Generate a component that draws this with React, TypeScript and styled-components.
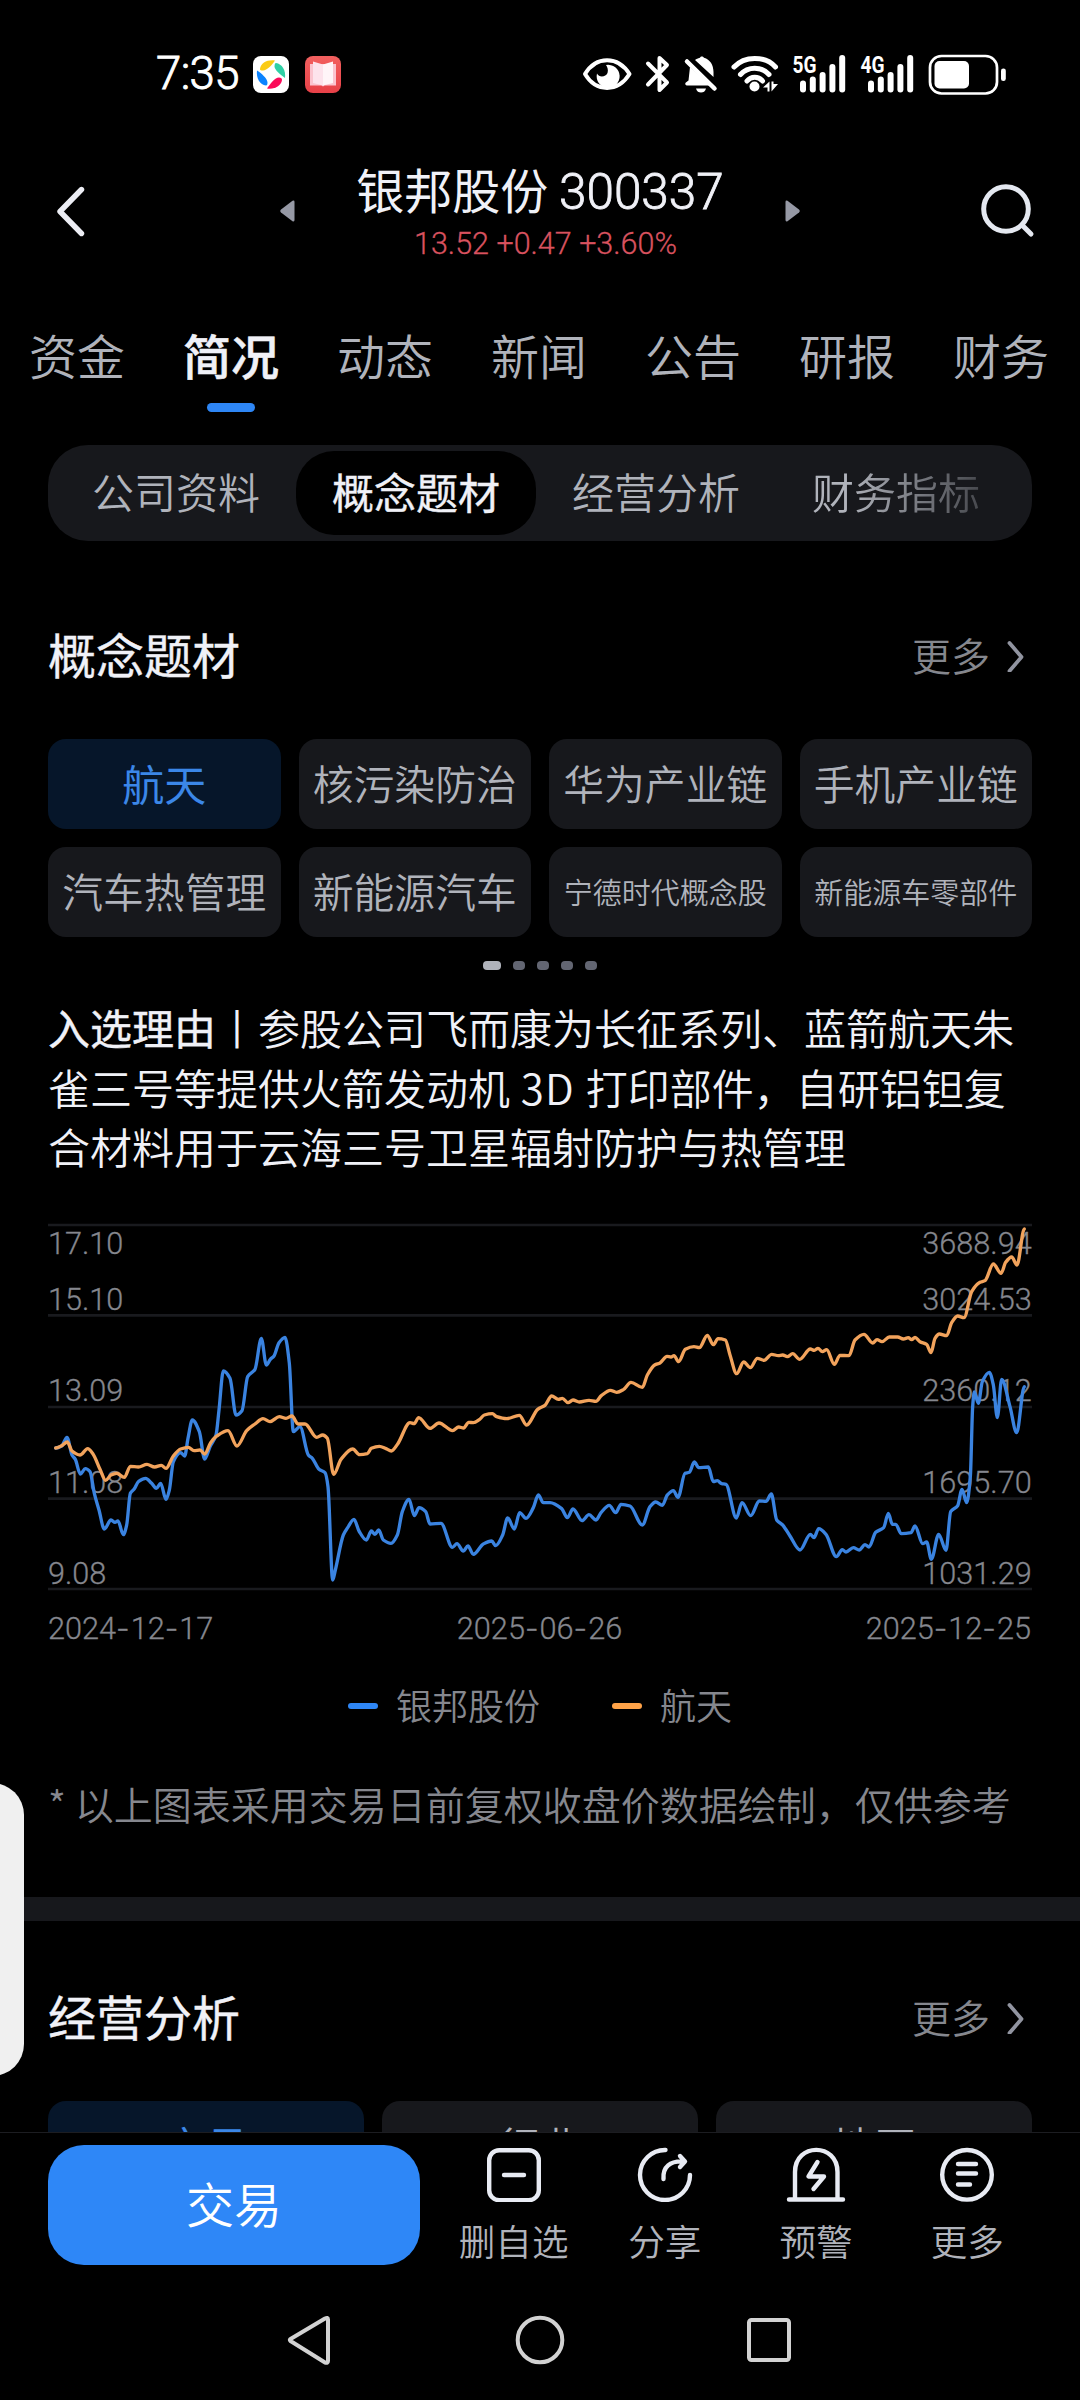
import React from 'react';
import styled, { createGlobalStyle } from 'styled-components';

const FONT = '"Noto Sans CJK SC", "Noto Sans", sans-serif';
const NUM = 'Roboto, "Noto Sans CJK SC", sans-serif';

const GlobalStyle = createGlobalStyle`
  *, *::before, *::after { box-sizing: border-box; }
  html, body { margin: 0; padding: 0; background: #000; }
  body { font-family: ${FONT}; font-weight: 350; color: #f0f1f7; }
  svg { display: block; flex: none; }
`;

const Screen = styled.div`
  position: relative;
  display: flex;
  flex-direction: column;
  width: 1080px;
  height: 2400px;
  background: #000;
  overflow: hidden;
`;

const StatusBar = styled.div`
  display: flex;
  align-items: center;
  height: 148px;
  padding: 0 74px 0 156px;
`;

const Clock = styled.span`
  width: 97px;
  font-family: ${NUM};
  font-size: 45.5px;
  line-height: 48px;
  font-weight: 300;
  letter-spacing: -0.6px;
  -webkit-text-stroke: 0.9px currentColor;
  color: #fff;
  white-space: nowrap;
`;

const AppBadges = styled.div`
  display: flex;
  gap: 16px;
`;

const StatusIcons = styled.div`
  margin-left: auto;
`;

const Header = styled.header`
  display: flex;
  align-items: center;
  justify-content: space-between;
  height: 126px;
  padding: 0 44px 0 56px;
`;

const HeaderCenter = styled.div`
  display: flex;
  align-items: center;
  justify-content: space-between;
  width: 520px;
`;

const TitleBlock = styled.div`
  display: flex;
  flex-direction: column;
  align-items: center;
`;

const Title = styled.h1`
  margin: 0;
  font-size: 48px;
  line-height: 60px;
  font-weight: 400;
  white-space: nowrap;
`;

const Code = styled.span`
  font-family: ${NUM};
  font-size: 49.5px;
  font-weight: 300;
  -webkit-text-stroke: 0.8px currentColor;
`;

const Quote = styled.div`
  margin-top: 2px;
  padding-left: 11px;
  font-family: ${NUM};
  font-size: 30.5px;
  line-height: 40px;
  font-weight: 300;
  -webkit-text-stroke: 0.3px currentColor;
  color: #d9525f;
  white-space: nowrap;
`;

const Tabs = styled.nav`
  display: flex;
  gap: 58px;
  height: 171px;
  padding: 45px 0 0 29px;
`;

const Tab = styled.div<{ $active?: boolean }>`
  display: flex;
  flex-direction: column;
  align-items: center;
  flex: none;
  width: 96px;
  font-size: 48px;
  line-height: 70px;
  font-weight: ${p => (p.$active ? 500 : 350)};
  -webkit-text-stroke: ${p => (p.$active ? 0.6 : 0)}px currentColor;
  color: ${p => (p.$active ? '#f0f1f7' : '#b0b3bb')};
  white-space: nowrap;
`;

const TabMark = styled.span`
  width: 48px;
  height: 9px;
  margin-top: 14px;
  border-radius: 4.5px;
  background: #2e86f5;
`;

const Segments = styled.div`
  display: flex;
  flex: none;
  height: 96px;
  margin: 0 48px;
  padding: 6px 8px;
  border-radius: 40px;
  background: #17181c;
`;

const Segment = styled.div<{ $active?: boolean; $fade?: boolean }>`
  display: flex;
  align-items: center;
  justify-content: center;
  width: 240px;
  padding-bottom: 4px;
  border-radius: 38px;
  font-size: 42px;
  line-height: 60px;
  font-weight: ${p => (p.$active ? 400 : 350)};
  -webkit-text-stroke: ${p => (p.$active ? 0.4 : 0)}px currentColor;
  color: ${p => (p.$active ? '#f0f1f7' : '#b0b3bb')};
  background: ${p => (p.$active ? '#000' : 'transparent')};
  ${p => p.$fade && 'mask-image: linear-gradient(90deg, #000 30%, rgba(0, 0, 0, 0.28) 88%);'}
`;

const Body = styled.main`
  flex: none;
  height: 1591px;
  overflow: hidden;
`;

const SectionHead = styled.div<{ $top: number }>`
  display: flex;
  align-items: center;
  justify-content: space-between;
  height: 70px;
  margin-top: ${p => p.$top}px;
  padding: 0 54px 0 48px;
`;

const SectionTitle = styled.h2`
  margin: -5px 0 0;
  font-size: 48px;
  line-height: 70px;
  font-weight: 400;
  -webkit-text-stroke: 0.4px currentColor;
`;

const More = styled.span`
  display: flex;
  align-items: center;
  gap: 16px;
  font-size: 39px;
  line-height: 60px;
  color: #85878e;
`;

const MoreText = styled.span`
  margin-top: -3px;
`;

const Chips = styled.div<{ $cols: number; $top: number }>`
  display: grid;
  grid-template-columns: repeat(${p => p.$cols}, 1fr);
  gap: 18px;
  margin: ${p => p.$top}px 48px 0;
`;

const Chip = styled.div<{ $active?: boolean; $size?: number }>`
  display: flex;
  align-items: center;
  justify-content: center;
  height: 90px;
  padding-bottom: 2px;
  border-radius: 18px;
  font-size: ${p => p.$size ?? 41}px;
  line-height: 60px;
  font-weight: ${p => (p.$active ? 400 : 350)};
  color: ${p => (p.$active ? '#3b87e8' : '#b0b3bb')};
  background: ${p => (p.$active ? '#06162a' : '#17181c')};
  white-space: nowrap;
`;

const Dots = styled.div`
  display: flex;
  justify-content: center;
  gap: 12px;
  margin-top: 24px;
`;

const Dot = styled.span<{ $active?: boolean }>`
  width: ${p => (p.$active ? 18 : 12)}px;
  height: 9px;
  border-radius: 4px;
  background: ${p => (p.$active ? '#b0b3bb' : '#636672')};
`;

const Reason = styled.p`
  margin: 27px 48px 0;
  font-size: 42px;
  line-height: 59.5px;
  color: #f0f1f7;
`;

const ReasonLabel = styled.span`
  font-weight: 400;
  -webkit-text-stroke: 0.4px currentColor;
`;

const Spaced = styled.span`
  letter-spacing: 1.3px;
`;

const ChartSvg = styled.svg`
  margin: 44.5px 0 0 48px;
`;

const Dates = styled.div`
  display: flex;
  justify-content: space-between;
  margin: 11px 49px 0 48px;
  font-family: ${NUM};
  font-size: 30.7px;
  line-height: 44px;
  font-weight: 300;
  -webkit-text-stroke: 0.3px currentColor;
  color: #85878e;
`;

const Dash = styled.span`
  font-family: Inter, sans-serif;
  font-size: 30px;
  letter-spacing: 1px;
`;

const Legend = styled.div`
  display: flex;
  justify-content: center;
  gap: 72px;
  margin-top: 30px;
  height: 50px;
`;

const LegendItem = styled.div`
  display: flex;
  align-items: center;
  gap: 18px;
  font-size: 36px;
  line-height: 50px;
  color: #85878e;
`;

const LegendText = styled.span`
  margin-top: -4px;
`;

const LegendMark = styled.span<{ $color: string }>`
  width: 30px;
  height: 6px;
  border-radius: 3px;
  background: ${p => p.$color};
`;

const Note = styled.p`
  margin: 42px 48px 0;
  font-size: 39px;
  line-height: 60px;
  color: #85878e;
  white-space: nowrap;
`;

const Divider = styled.div`
  height: 24px;
  margin-top: 64px;
  background: #17181c;
`;

const ActionBar = styled.footer`
  display: flex;
  flex: none;
  height: 148px;
  padding: 12px 37px 0 48px;
  border-top: 1px solid #1c1d21;
  background: #000;
`;

const TradeButton = styled.div`
  display: flex;
  align-items: center;
  justify-content: center;
  width: 372px;
  height: 120px;
  margin-right: 18px;
  padding-bottom: 6px;
  border-radius: 36px;
  background: #2e87f7;
  color: #fff;
  font-size: 48px;
  line-height: 70px;
`;

const Action = styled.div`
  display: flex;
  flex: 1;
  flex-direction: column;
  align-items: center;
  padding-top: 1px;
  color: #b0b3bb;
  font-size: 36.6px;
  line-height: 50px;
  white-space: nowrap;
`;

const ActionLabel = styled.span`
  margin-top: 14px;
`;

const SystemNav = styled.div`
  display: flex;
  align-items: center;
  justify-content: space-between;
  height: 120px;
  padding: 0 286px 0 285px;
`;

const SideHandle = styled.div`
  position: absolute;
  left: -40px;
  top: 1783px;
  width: 64px;
  height: 293px;
  border-radius: 40px;
  background: #f0f0f0;
`;

type Point = [number, number];

const STOCK: Point[] = [
  [167,744],[185,738],[201,712],[216,765],[226,778],[241,822],[256,806],[270,815],[283,880],[297,930],[313,987],[333,960],[345,967],[354,963],[370,1004],[380,975],[391,880],[402,868],[416,844],[437,835],[455,850],[469,865],[482,850],[498,898],[508,870],[520,785],[542,758],[554,768],[564,715],[577,660],[598,695],[614,777],[630,740],[648,705],[657,630],[670,513],[690,535],[708,645],[726,632],[743,530],[765,508],[784,415],[799,495],[811,478],[822,468],[837,428],[855,412],[868,490],[880,695],[900,680],[925,765],[937,775],[957,808],[975,818],[984,860],[998,1140],[1006,1110],[1030,1005],[1043,983],[1062,958],[1077,993],[1099,1020],[1114,993],[1125,1003],[1136,990],[1150,1020],[1173,1030],[1192,1005],
  [1207,935],[1227,898],[1243,947],[1257,923],[1277,935],[1290,972],[1323,970],[1357,1042],[1371,1031],[1390,1053],[1404,1038],[1420,1063],[1450,1032],[1475,1023],[1487,1037],[1508,1005],[1523,954],[1543,987],[1559,938],[1578,955],[1600,923],[1615,885],[1630,908],[1650,908],[1685,926],[1702,953],[1719,927],[1746,962],[1767,944],[1788,960],[1803,938],[1828,916],[1847,938],[1863,913],[1890,918],[1927,975],[1950,920],[1967,906],[1987,916],[2002,885],[2020,872],[2034,892],[2055,820],[2068,817],[2083,786],[2096,803],[2125,801],[2140,845],[2152,842],[2165,851],[2178,853],[2209,954],
  [2226,908],[2252,947],[2278,903],[2298,904],[2314,882],[2330,960],[2348,975],[2370,1008],[2400,1050],[2431,1003],[2442,1013],[2456,986],[2478,1003],[2509,1070],[2527,1049],[2538,1056],[2560,1043],[2578,1050],[2595,1034],[2607,1041],[2627,997],[2651,983],[2665,940],[2677,973],[2687,973],[2704,1001],[2733,998],[2745,978],[2768,1031],[2780,1026],[2794,1078],[2816,1003],[2838,1051],[2852,935],[2873,917],[2886,868],[2900,908],[2911,830],[2918,620],[2923,576],[2935,610],[2947,545],[2968,517],[2980,555],[2992,653],[3005,538],[3030,620],[3050,698],[3073,560],
];

const SECTOR: Point[] = [
  [167,744],[185,737],[202,726],[216,753],[240,765],[263,746],[279,762],[300,808],[317,841],[333,825],[350,820],[373,832],[391,799],[415,801],[441,793],[464,801],[484,796],[498,805],[520,768],[542,747],[565,742],[582,752],[600,750],[614,762],[632,728],[648,710],[684,692],[711,738],[740,692],[765,672],[789,656],[810,665],[838,650],[858,655],[876,648],[894,672],[915,672],[950,712],[968,705],[982,715],[1001,823],[1023,778],[1058,747],[1079,764],[1102,761],[1114,745],[1138,739],[1158,746],[1174,753],[1193,732],
  [1230,668],[1242,671],[1256,653],[1290,685],[1317,669],[1358,692],[1376,681],[1391,684],[1406,667],[1420,668],[1438,659],[1453,645],[1477,641],[1490,650],[1520,656],[1558,646],[1580,675],[1613,628],[1635,616],[1655,588],[1675,598],[1687,595],[1704,608],[1719,600],[1738,606],[1767,601],[1788,604],[1804,587],[1831,571],[1850,577],[1870,569],[1893,547],[1927,562],[1942,525],[1964,495],[1980,489],[2001,469],[2013,471],[2022,467],[2036,485],[2056,448],[2082,440],[2098,443],[2122,406],[2140,434],[2154,416],[2176,420],[2190,465],[2210,521],
  [2231,486],[2251,503],[2272,475],[2292,481],[2315,463],[2335,467],[2348,465],[2362,470],[2378,461],[2399,478],[2431,447],[2443,451],[2454,445],[2467,455],[2480,449],[2503,493],[2520,466],[2547,467],[2565,420],[2592,403],[2618,429],[2631,419],[2646,425],[2668,411],[2693,411],[2710,417],[2725,413],[2735,419],[2745,412],[2760,425],[2780,433],[2793,458],[2805,415],[2818,402],[2840,407],[2855,368],[2873,348],[2892,353],[2915,275],[2940,247],[2955,242],[2980,192],[3003,220],[3017,187],[3035,171],[3051,195],[3073,87],
];

/* Smooth curve through the points; tangents flatten at local extremes so it never overshoots. */
function curve(pts: Point[]): string {
  const slope = pts.map((p, i) => {
    if (i === 0 || i === pts.length - 1) return 0;
    const a = (p[1] - pts[i - 1][1]) / (p[0] - pts[i - 1][0]);
    const b = (pts[i + 1][1] - p[1]) / (pts[i + 1][0] - p[0]);
    return a * b <= 0 ? 0 : (2 * a * b) / (a + b);
  });
  let d = `M${pts[0][0]} ${pts[0][1]}`;
  for (let i = 1; i < pts.length; i++) {
    const [x0, y0] = pts[i - 1];
    const [x1, y1] = pts[i];
    const h = (x1 - x0) / 3;
    d += `C${x0 + h} ${y0 + slope[i - 1] * h} ${x1 - h} ${y1 - slope[i] * h} ${x1} ${y1}`;
  }
  return d;
}

const GRID = [75, 346, 621, 896, 1167];
const LABELS: [number, string, string][] = [
  [162, '17.10', '3688.94'],
  [330, '15.10', '3024.53'],
  [603, '13.09', '2360.12'],
  [879, '11.08', '1695.70'],
  [1152, '9.08', '1031.29'],
];

const Chart = () => (
  <ChartSvg width="984" height="375" viewBox="144 60 2952 1125">
    {GRID.map(y => (
      <path key={y} d={`M144 ${y}H3096`} stroke="#191a1e" strokeWidth="8" />
    ))}
    {LABELS.map(([y, l, r]) => (
      <g key={y} fill="#85878e" stroke="#85878e" strokeWidth="0.9" fontSize="92" fontFamily={NUM} fontWeight="300">
        <text x="144" y={y}>{l}</text>
        <text x="3095" y={y} textAnchor="end">{r}</text>
      </g>
    ))}
    <g fill="none" strokeWidth="10" strokeLinecap="round" strokeLinejoin="round">
      <path d={curve(STOCK)} stroke="#3a83e0" />
      <path d={curve(SECTOR)} stroke="#f2a35c" />
    </g>
  </ChartSvg>
);

const SwirlBadge = () => (
  <svg width="36" height="37" viewBox="0 0 36 37">
    <rect width="36" height="37" rx="8" fill="#fff" />
    <path d="M7 13C8 7 14 3.500 22 4.500C19 9 14 14.500 10 14.500C8 14.500 6.800 14 7 13Z" fill="#fbcb14" />
    <path d="M23 7C29 8 33 14 32 22C28 19 21.500 14 21.500 10.500C21.500 8.500 22 7 23 7Z" fill="#2fd0a5" />
    <path d="M29 24C28 30 22 33.500 14 32.500C17 28 22 21.500 26 21.500C28 21.500 29.200 22.500 29 24Z" fill="#fb0a58" />
    <path d="M13 29.500C7 29 3 22 4 14.500C8 17 14.500 22.500 14.500 26.500C14.500 28.500 14 29.600 13 29.500Z" fill="#0b83ff" />
  </svg>
);

const BookBadge = () => (
  <svg width="36" height="37" viewBox="0 0 36 37">
    <defs>
      <linearGradient id="book" x1="0" y1="0" x2="0" y2="1">
        <stop offset="0" stopColor="#f2605f" />
        <stop offset="1" stopColor="#e84148" />
      </linearGradient>
    </defs>
    <rect width="36" height="37" rx="8" fill="url(#book)" />
    <path d="M5 8H31V29.500H19.500L18 30.500L16.500 29.500H5Z" fill="#fbc4cf" />
    <path d="M8 5.500L18 8.500V29.500L8 27Z" fill="#fde3ec" />
    <path d="M28 5.500L18 8.500V29.500L28 27Z" fill="#fff5f8" />
  </svg>
);

const Signal = ({ x, label }: { x: number; label: string }) => (
  <g>
    <text x={x} y="21" fontSize="24.500" fontFamily={NUM} fontWeight="700" textLength="24" lengthAdjust="spacingAndGlyphs">
      {label}
    </text>
    {[12, 16, 20.500, 28.500, 37.500].map((h, i) => (
      <rect key={i} x={x + 7.500 + i * 9.800} y={40.500 - h} width="6" height={h} rx="3" />
    ))}
  </g>
);

/* Status glyphs share one canvas: eye, bluetooth, muted bell, wifi, two signals, battery. */
const StatusGlyphs = () => (
  <svg width="426" height="64" viewBox="580 -10 426 64" fill="#fff">
    <path d="M585 22C596 3.500 618 3.500 629.500 22C618 40.500 596 40.500 585 22Z" fill="none" stroke="#fff" strokeWidth="4" strokeLinejoin="round" />
    <path d="M606 13A11.500 11.500 0 1 1 597 21.500C599 26 606 25 607.500 21C608.500 18 607.500 15 606 13Z" />
    <path d="M648 11.500L667 30.500L659.500 38V6L667 13L648 32.500" fill="none" stroke="#fff" strokeWidth="4" strokeLinecap="round" strokeLinejoin="round" />
    <path d="M690 15L710.500 33.500H687.500C685 33.500 684.500 31 686.500 30L688.500 28.500Z" />
    <path d="M695 8C697 6.500 699 6.300 700 5.800C700.500 4 703 4 704 5.800C710 7.500 713.500 13 713.500 20V25Z" />
    <path d="M687 9.500L714.500 36.500" stroke="#fff" strokeWidth="4.500" strokeLinecap="round" />
    <path d="M696 36.500H706C705 39.500 703.500 40.500 701 40.500C698.500 40.500 697 39.500 696 36.500Z" />
    <path d="M734 15C744.500 3.500 765 3.500 775.500 15M740.500 22.500C748 14 761.500 14 769 22.500M747 29C751 24 758.500 24 762.500 29" fill="none" stroke="#fff" strokeWidth="5" strokeLinecap="round" />
    <circle cx="754.500" cy="34.500" r="5" />
    <path d="M769.500 29.500V39.500H767.500V35.500H763ZM771.500 39.500V29.500H773.500V32H778Z" />
    <Signal x={792.500} label="5G" />
    <Signal x={860.500} label="4G" />
    <rect x="930" y="4" width="67" height="37.500" rx="11.500" fill="none" stroke="#fff" strokeWidth="2.700" />
    <rect x="934.500" y="9" width="34.500" height="27.500" rx="5" />
    <rect x="1001" y="16.500" width="4.800" height="12.500" rx="2.300" />
  </svg>
);

const Chevron = () => (
  <svg width="20" height="34" viewBox="0 0 20 34" fill="none" stroke="#9194a0" strokeWidth="3.800" strokeLinecap="round" strokeLinejoin="round">
    <path d="M3.500 5L15.500 19L3.500 33" />
  </svg>
);

const MoreLink = () => (
  <More>
    <MoreText>更多</MoreText>
    <Chevron />
  </More>
);

const DateText = ({ value }: { value: string }) => {
  const [y, m, d] = value.split('-');
  return <span>{y}<Dash>-</Dash>{m}<Dash>-</Dash>{d}</span>;
};

const actionIcon = {
  width: 60,
  height: 56,
  viewBox: '0 0 60 56',
  fill: 'none',
  stroke: '#e8ebf3',
  strokeWidth: 4.4,
  strokeLinecap: 'round' as const,
  strokeLinejoin: 'round' as const,
};

const TABS = ['资金', '简况', '动态', '新闻', '公告', '研报', '财务'];
const SEGMENTS = ['公司资料', '概念题材', '经营分析', '财务指标'];
const CONCEPTS = ['航天', '核污染防治', '华为产业链', '手机产业链', '汽车热管理', '新能源汽车', '宁德时代概念股', '新能源车零部件'];
const chipSize = (t: string) => (t.length > 5 ? 29 : t.length > 4 ? 40.8 : 42);

export default function App() {
  return (
    <Screen>
      <GlobalStyle />
      <StatusBar>
        <Clock>7:35</Clock>
        <AppBadges>
          <SwirlBadge />
          <BookBadge />
        </AppBadges>
        <StatusIcons>
          <StatusGlyphs />
        </StatusIcons>
      </StatusBar>

      <Header>
        <svg width="44" height="52" viewBox="0 0 44 52" fill="none" stroke="#ecedf4" strokeWidth="5.400" strokeLinecap="round" strokeLinejoin="round">
          <path d="M25.500 4.500L4 26.500L25.500 48.500" />
        </svg>
        <HeaderCenter>
          <svg width="15" height="22" viewBox="0 0 15 22" fill="#9699a5">
            <path d="M12.500 .8Q14.500 0 14.500 2V20Q14.500 22 12.500 21.200L1 12.500Q-.5 11 1 9.500Z" />
          </svg>
          <TitleBlock>
            <Title>银邦股份 <Code>300337</Code></Title>
            <Quote>13.52 +0.47 +3.60%</Quote>
          </TitleBlock>
          <svg width="15" height="22" viewBox="0 0 15 22" fill="#9699a5">
            <path d="M2.500 .8Q.5 0 .5 2V20Q.5 22 2.500 21.200L14 12.500Q15.500 11 14 9.500Z" />
          </svg>
        </HeaderCenter>
        <svg width="56" height="54" viewBox="0 0 56 54" fill="none" stroke="#e4e8f0" strokeWidth="5" strokeLinecap="round">
          <circle cx="26" cy="25" r="22.300" />
          <path d="M43 42L51 50" />
        </svg>
      </Header>

      <Tabs>
        {TABS.map((t, i) => (
          <Tab key={t} $active={i === 1}>
            {t}
            {i === 1 && <TabMark />}
          </Tab>
        ))}
      </Tabs>

      <Segments>
        {SEGMENTS.map((t, i) => (
          <Segment key={t} $active={i === 1} $fade={i === 3}>{t}</Segment>
        ))}
      </Segments>

      <Body>
        <SectionHead $top={79}>
          <SectionTitle>概念题材</SectionTitle>
          <MoreLink />
        </SectionHead>
        <Chips $cols={4} $top={49}>
          {CONCEPTS.map((t, i) => (
            <Chip key={t} $active={i === 0} $size={chipSize(t)}>{t}</Chip>
          ))}
        </Chips>
        <Dots>
          {[0, 1, 2, 3, 4].map(i => <Dot key={i} $active={i === 0} />)}
        </Dots>
        <Reason>
          <ReasonLabel>入选理由</ReasonLabel>丨参股公司飞而康为长征系列、蓝箭航天朱雀三号等提供火箭发动机<Spaced> 3D </Spaced>打印部件，自研铝钽复合材料用于云海三号卫星辐射防护与热管理
        </Reason>
        <Chart />
        <Dates>
          <DateText value="2024-12-17" />
          <DateText value="2025-06-26" />
          <DateText value="2025-12-25" />
        </Dates>
        <Legend>
          <LegendItem><LegendMark $color="#2e86f5" /><LegendText>银邦股份</LegendText></LegendItem>
          <LegendItem><LegendMark $color="#ffa348" /><LegendText>航天</LegendText></LegendItem>
        </Legend>
        <Note>* 以上图表采用交易日前复权收盘价数据绘制，仅供参考</Note>
        <Divider />
        <SectionHead $top={61}>
          <SectionTitle>经营分析</SectionTitle>
          <MoreLink />
        </SectionHead>
        <Chips $cols={3} $top={49}>
          <Chip $active $size={42}>交易</Chip>
          <Chip $size={42}>行业</Chip>
          <Chip $size={42}>地区</Chip>
        </Chips>
      </Body>

      <ActionBar>
        <TradeButton>交易</TradeButton>
        <Action>
          <svg {...actionIcon}>
            <rect x="5.200" y="4.200" width="49.600" height="50" rx="10" />
            <path d="M20 29H40" />
          </svg>
          <ActionLabel>删自选</ActionLabel>
        </Action>
        <Action>
          <svg {...actionIcon}>
            <path d="M30.500 4A25 25 0 1 0 55 29" />
            <path d="M28.500 33C27.500 21 35 14.500 49 15.500M45 10L50 15.500L45 21" />
          </svg>
          <ActionLabel>分享</ActionLabel>
        </Action>
        <Action>
          <svg {...actionIcon}>
            <path d="M3 53.500H57M9 53.500V26C9 -3.500 51.500 -3.500 51.500 26V53.500" />
            <path d="M31.500 16L22.500 30.500H38L27.500 43" />
          </svg>
          <ActionLabel>预警</ActionLabel>
        </Action>
        <Action>
          <svg {...actionIcon}>
            <circle cx="30" cy="28.800" r="24.800" />
            <path d="M21 18H39M21 27.500H39M21 38.500H33" />
          </svg>
          <ActionLabel>更多</ActionLabel>
        </Action>
      </ActionBar>

      <SystemNav>
        <svg width="48" height="54" viewBox="0 0 48 54" fill="none" stroke="#d2d2d2" strokeWidth="4" strokeLinejoin="round">
          <path d="M5 26.500Q4.500 27 5.500 28L40 49.500Q43 50.500 43 48V6.500Q43 4 40 5.500L5.500 26Z" />
        </svg>
        <svg width="54" height="54" viewBox="0 0 54 54" fill="none" stroke="#d2d2d2" strokeWidth="4">
          <circle cx="27" cy="27" r="22.300" />
        </svg>
        <svg width="48" height="54" viewBox="0 0 48 54" fill="none" stroke="#d2d2d2" strokeWidth="4">
          <rect x="3" y="7" width="40" height="40" rx="2.500" />
        </svg>
      </SystemNav>

      <SideHandle />
    </Screen>
  );
}
